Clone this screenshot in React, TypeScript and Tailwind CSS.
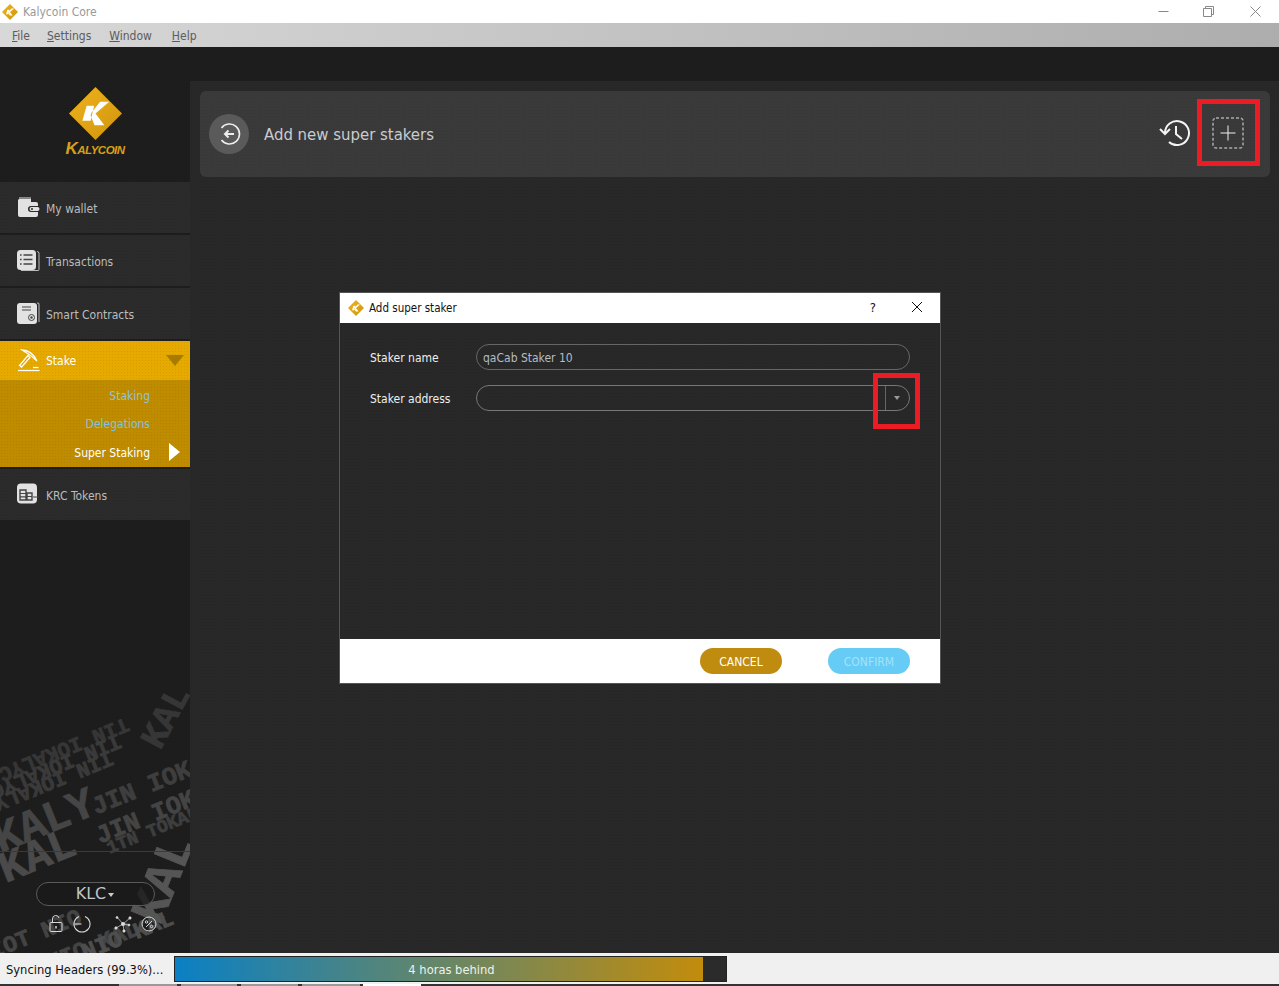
const dots = "bg-[radial-gradient(rgba(0,0,0,0.07)_1px,transparent_1px)] bg-[length:3px_3px]";

function Diamond({ size }: { size: number }) {
  return (
    <svg width={size} height={size} viewBox="0 0 54 54">
      <defs>
        <linearGradient id="gold" x1="0" y1="0" x2="1" y2="1">
          <stop offset="0" stopColor="#f0b31e" />
          <stop offset="1" stopColor="#cf940c" />
        </linearGradient>
      </defs>
      <path d="M27 0 L54 27 L27 54 L0 27 Z" fill="url(#gold)" />
      <path d="M18 19 L25.6 19 L22 34.5 L13.6 34.5 Z M41 15 L31.7 15 L23 26 L22 29 L26 39 L36 39 L27 27 Z" fill="#fff" />
    </svg>
  );
}

function WalletIcon() {
  return (
    <svg width="23" height="23" viewBox="0 0 23 23" fill="#e2e2e2">
      <path d="M2 1.5 h12 v1 h-12 z" />
      <path d="M1 4 a2 2 0 0 1 2 -1 h11 v3 h5 a2 2 0 0 1 2 2 v2 h-7 a3 3 0 0 0 0 6 h7 v3 a2 2 0 0 1 -2 2 h-16 a2 2 0 0 1 -2 -2 z" />
      <rect x="12.5" y="11" width="10" height="4" rx="2" />
      <circle cx="15" cy="13" r="1" fill="#2a2a2a" />
    </svg>
  );
}

function ListIcon() {
  return (
    <svg width="23" height="23" viewBox="0 0 23 23">
      <rect x="0" y="1" width="19" height="20" rx="3.5" fill="#e2e2e2" />
      <path d="M20 2.5 a2 2 0 0 1 2 2 v16 a1 1 0 0 1 -1 1 h-17" fill="none" stroke="#e2e2e2" strokeWidth="0.8" />
      <path d="M6.5 6 h9 M6.5 10.5 h9 M6.5 15 h9" stroke="#444" strokeWidth="1.4" />
      <path d="M3 6 h1.6 M3 10.5 h1.6 M3 15 h1.6" stroke="#444" strokeWidth="1.4" />
    </svg>
  );
}

function ContractIcon() {
  return (
    <svg width="23" height="23" viewBox="0 0 23 23">
      <rect x="0" y="1" width="20" height="21" rx="3" fill="#e2e2e2" />
      <path d="M20 1 h1 a1 1 0 0 1 1 1 v18" fill="none" stroke="#e2e2e2" strokeWidth="0.8" />
      <path d="M5 5 h9 M5 8 h9" stroke="#444" strokeWidth="1.2" />
      <circle cx="14.5" cy="15.5" r="3" fill="none" stroke="#444" strokeWidth="1" />
      <circle cx="14.5" cy="15.5" r="1.2" fill="#444" />
    </svg>
  );
}

function PickIcon() {
  return (
    <svg width="23" height="23" viewBox="0 0 23 23" fill="none" stroke="#fff" strokeWidth="1.3">
      <path d="M1 21.5 h21.5" />
      <path d="M16 18.5 h5.5" />
      <path d="M2.5 16.5 L11 6.5 L13 8.5 L4.5 18 Z" />
      <path d="M5 1 C11 1 17 5 20 12 C16 8 13 5.5 5 1 Z" />
    </svg>
  );
}

function TokenIcon() {
  return (
    <svg width="23" height="23" viewBox="0 0 23 23">
      <rect x="0" y="0.5" width="20" height="20" rx="4" fill="#e2e2e2" />
      <path d="M3 7 h6 v10 h-6 z M10 10 h5 v7 h-5 z" fill="none" stroke="#444" strokeWidth="1.4" />
      <path d="M3 10.5 h6 M3 13.8 h6 M10 13.5 h5 M16 14 h6" stroke="#444" strokeWidth="1.2" />
    </svg>
  );
}

function NavRow({ icon, label }: { icon: React.ReactNode; label: string }) {
  return (
    <div className={`flex h-[51px] items-center bg-[#2b2b2b] pl-[17px] ${dots}`}>
      <span className="flex w-[29px] shrink-0">{icon}</span>
      <span className="pt-[3px] text-[12px] text-[#bcbcbc]">{label}</span>
    </div>
  );
}

// decorative lettering behind the bottom of the sidebar, top values are page y
function Tread() {
  return (
    <div aria-hidden className="absolute inset-0 -top-[47px] overflow-hidden select-none [font-family:'Liberation_Mono',monospace] font-bold leading-none whitespace-nowrap [-webkit-text-stroke:0.8px_currentColor]">
      <div className="absolute left-[-6px] top-[738px] rotate-[158deg] text-[21px] text-[#363636]">TIN IOKALYC</div>
      <div className="absolute left-[-14px] top-[755px] rotate-[158deg] text-[21px] text-[#3a3a3a]">TIN IOKALYC</div>
      <div className="absolute left-[-22px] top-[772px] rotate-[158deg] text-[21px] text-[#3a3a3a]">TIN IOKALYC</div>
      <div className="absolute left-[88px] top-[768px] rotate-[-22deg] text-[25px] text-[#3e3e3e]">JIN IOKALY</div>
      <div className="absolute left-[92px] top-[797px] rotate-[-22deg] text-[25px] text-[#444]">JIN IOKALY</div>
      <div className="absolute left-[104px] top-[822px] rotate-[-22deg] text-[18px] text-[#3e3e3e]">1TN TOKAL</div>
      <div className="absolute left-[-8px] top-[800px] rotate-[-22deg] text-[44px] text-[#454545]">KALY</div>
      <div className="absolute left-[-2px] top-[835px] rotate-[-22deg] text-[44px] text-[#4a4a4a]">KAL</div>
      <div className="absolute left-[135px] top-[700px] rotate-[-62deg] text-[36px] text-[#363636]">KAL</div>
      <div className="absolute left-[120px] top-[855px] rotate-[-68deg] text-[50px] text-[#555]">KAL</div>
      <div className="absolute left-[-12px] top-[924px] rotate-[-22deg] text-[23px] text-[#444]">IOT NIO</div>
      <div className="absolute left-[-8px] top-[946px] rotate-[-22deg] text-[23px] text-[#444]">IOT NIO KAL</div>
      <div className="absolute left-[80px] top-[925px] rotate-[-22deg] text-[23px] text-[#4e4e4e]">NIO KAL</div>
    </div>
  );
}

export default function App() {
  return (
    <div className="relative flex h-[986px] w-[1279px] flex-col overflow-hidden bg-[#1b1b1b] [font-family:'DejaVu_Sans_Condensed',sans-serif]">
      {/* window title */}
      <div className="flex h-[23px] shrink-0 items-center bg-white">
        <span className="ml-[2px] flex w-[21px]"><Diamond size={16} /></span>
        <span className="text-[12px] text-[#999]">Kalycoin Core</span>
        <div className="ml-auto flex items-center pr-[18px]">
          <svg width="11" height="11" viewBox="0 0 11 11" stroke="#888" fill="none"><path d="M0.5 5.5 h10" /></svg>
          <svg className="ml-[34px]" width="11" height="11" viewBox="0 0 11 11" stroke="#888" fill="none"><path d="M0.5 2.5 h8 v8 h-8 z M2.5 2.5 v-2 h8 v8 h-2" /></svg>
          <svg className="ml-[36px]" width="11" height="11" viewBox="0 0 11 11" stroke="#888" fill="none"><path d="M0.5 0.5 L10.5 10.5 M10.5 0.5 L0.5 10.5" /></svg>
        </div>
      </div>
      {/* menu bar */}
      <div className="flex h-[24px] shrink-0 items-center bg-gradient-to-r from-[#d8d8d8] to-[#adadad] pl-[12px] pt-[1px] text-[12px] text-[#5c5c5c]">
        <span><span className="underline">F</span>ile</span>
        <span className="ml-[17px]"><span className="underline">S</span>ettings</span>
        <span className="ml-[18px]"><span className="underline">W</span>indow</span>
        <span className="ml-[20px]"><span className="underline">H</span>elp</span>
      </div>

      <div className={`flex h-[906px] shrink-0 bg-[#1d1d1d] ${dots}`}>
        <aside className="relative flex w-[190px] shrink-0 flex-col">
          <Tread />
          <div className="relative flex h-[135px] shrink-0 flex-col items-center pt-[40px]">
            <Diamond size={53} />
            <span className="mt-[1px] text-[11.5px] font-bold italic leading-[15px] tracking-[-0.5px] text-[#d9a017] [font-family:'Liberation_Sans',sans-serif]">
              <span className="text-[17px]">K</span>ALYCOIN
            </span>
          </div>
          <nav className="relative flex flex-col gap-[2px]">
            <NavRow icon={<WalletIcon />} label="My wallet" />
            <NavRow icon={<ListIcon />} label="Transactions" />
            <NavRow icon={<ContractIcon />} label="Smart Contracts" />
            <div className="flex flex-col">
              <div className={`flex h-[39px] items-center bg-[#e5a900] pl-[17px] pr-[6px] ${dots}`}>
                <span className="flex w-[29px] shrink-0"><PickIcon /></span>
                <span className="text-[12px] text-white">Stake</span>
                <span className="ml-auto h-0 w-0 border-x-[9px] border-t-[11px] border-x-transparent border-t-[#a67b00]" />
              </div>
              <div className={`flex h-[87px] flex-col items-end bg-[#bf8c00] pr-[40px] pt-[2px] text-[12px] ${dots}`}>
                <span className="flex h-[29px] items-center text-[#8fc4d2]">Staking</span>
                <span className="flex h-[29px] items-center text-[#7cc4e0]">Delegations</span>
                <span className="relative flex h-[29px] items-center text-white">
                  Super Staking
                  <span className="absolute left-[calc(100%+19px)] top-[4px] h-0 w-0 border-y-[9px] border-l-[11px] border-y-transparent border-l-white" />
                </span>
              </div>
            </div>
            <NavRow icon={<TokenIcon />} label="KRC Tokens" />
          </nav>
          <div className="relative mt-auto flex h-[102px] shrink-0 flex-col items-center border-t border-[#3a3a3a] pt-[30px]">
            <div className="flex h-[24px] w-[119px] items-center justify-center rounded-full border border-[#5a5a5a] bg-[#1a1a1a]/80 text-[16px] text-[#c0c4cc] [font-family:'DejaVu_Sans',sans-serif]">
              KLC
              <span className="ml-[2px] mt-[2px] h-0 w-0 border-x-[3px] border-t-[4px] border-x-transparent border-t-[#ccc]" />
            </div>
            <div className="mt-[9px] flex items-center self-stretch pl-[49px]">
              <svg width="14" height="18" viewBox="0 0 14 18" fill="none" stroke="#d8d8d8">
                <rect x="1" y="7.5" width="12" height="9" rx="1" />
                <path d="M3.5 7.5 V4 a3.3 3.3 0 0 1 6.5 -1" />
                <path d="M7 11 v2.5" strokeWidth="1.5" />
              </svg>
              <svg className="ml-[10px]" width="18" height="18" viewBox="0 0 18 18" fill="none" stroke="#d8d8d8" strokeWidth="1.1">
                <path d="M6 1.6 a8 8 0 1 0 6 0" />
                <path d="M1.5 9 h7" />
              </svg>
              <svg className="ml-[23px]" width="18" height="18" viewBox="0 0 18 18" fill="#e0e0e0" stroke="#d8d8d8" strokeWidth="0.7">
                <path d="M9 9 L3 2 M9 9 L16 3 M9 9 L2 13 M9 9 L10 16 M9 9 L15 10" fill="none" />
                <circle cx="9" cy="9" r="1.7" /><circle cx="3" cy="2.5" r="1" /><circle cx="16" cy="3" r="1.2" />
                <circle cx="2" cy="13" r="1.2" /><circle cx="10" cy="16" r="1.2" /><circle cx="15" cy="10" r="1" />
              </svg>
              <svg className="ml-[9px]" width="16" height="16" viewBox="0 0 16 16" fill="none" stroke="#d8d8d8">
                <circle cx="8" cy="8" r="7" />
                <path d="M5 11 L11 5" />
                <circle cx="5.5" cy="6" r="1.2" /><circle cx="10.5" cy="10.5" r="1.2" />
              </svg>
            </div>
          </div>
        </aside>

        <div className={`mt-[34px] flex-1 bg-[#282828] py-[10px] pl-[10px] pr-[9px] ${dots}`}>
          <div className={`flex h-[86px] items-center rounded-[6px] bg-[#3a3a3a] pl-[9px] pr-[26px] ${dots}`}>
            <span className="flex h-[40px] w-[40px] items-center justify-center rounded-full bg-[#5a5a5a]">
              <svg width="26" height="26" viewBox="0 0 26 26" fill="none" stroke="#eee" strokeWidth="1.6">
                <path d="M5.5 7 a10 10 0 1 1 0 12" />
                <path d="M18 13 h-9 M12.5 9.5 L9 13 L12.5 16.5" strokeWidth="2" />
              </svg>
            </span>
            <span className="ml-[15px] pt-[2px] text-[16.6px] text-[#c9ccd0]">Add new super stakers</span>
            <div className="ml-auto flex items-center gap-[21px]">
              <svg className="mb-[3px]" width="32" height="28" viewBox="0 0 32 28" fill="none" stroke="#f4f4f4" strokeWidth="2">
                <path d="M6 14 a12 12 0 1 1 4 9" />
                <path d="M1 10 L6 15 L11 10" />
                <path d="M17 7 v8 l6 5" />
              </svg>
              <svg className="mb-[2px]" width="32" height="32" viewBox="0 0 32 32" fill="none">
                <rect x="1" y="1" width="30" height="30" rx="3" stroke="#aaa" strokeWidth="1.5" strokeDasharray="3 2" />
                <path d="M16 8.5 v15 M8.5 16 h15" stroke="#f0f0f0" />
              </svg>
            </div>
          </div>
        </div>
      </div>

      {/* status bar */}
      <div className="flex h-[31px] shrink-0 items-center bg-[#f0f0f0] pl-[6px] text-[12.8px] text-[#111]">
        <span className="w-[168px] pt-[3px]">Syncing Headers (99.3%)...</span>
        <div className="flex h-[26px] w-[553px] border border-[#222] bg-[#2b2b2b]">
          <div className="w-[528px] bg-linear-to-r/srgb from-[#0a80c4] to-[#c28c0c]" />
        </div>
      </div>
      <div className="absolute left-[175px] top-[957px] flex h-[26px] w-[553px] items-center justify-center text-[12.8px] text-[#eef2ee]">4 horas behind</div>
      <div className="flex h-[2px] shrink-0 bg-[#333] pl-[119px]">
        <span className="w-[58px] bg-[#999]" />
        <span className="ml-[4px] w-[56px] bg-[#999]" />
        <span className="ml-[4px] w-[57px] bg-[#999]" />
        <span className="ml-[4px] w-[58px] bg-[#999]" />
        <span className="ml-[3px] w-[58px] bg-white" />
      </div>

      {/* dialog */}
      <div className="absolute left-[339px] top-[292px] flex h-[392px] w-[602px] flex-col border border-[#555] bg-[#282828]">
        <div className="flex h-[30px] shrink-0 items-center bg-white pl-[8px] pr-[17px]">
          <span className="flex w-[21px]"><Diamond size={16} /></span>
          <span className="pt-[2px] text-[11.5px] text-[#111]">Add super staker</span>
          <span className="ml-auto mr-[1px] text-[13px] text-[#111]">?</span>
          <svg className="ml-[34px] mb-[2px]" width="12" height="12" viewBox="0 0 12 12" stroke="#111" fill="none"><path d="M1 1 L11 11 M11 1 L1 11" /></svg>
        </div>
        <div className={`flex flex-1 flex-col gap-[15px] px-[30px] pt-[21px] ${dots}`}>
          <div className="flex items-center">
            <span className="w-[106px] pt-[1px] text-[12px] text-[#eee]">Staker name</span>
            <div className="flex h-[26px] flex-1 items-center rounded-full border border-[#666] pl-[6px] pt-[1px] text-[12px] text-[#b4bcc4]">qaCab Staker 10</div>
          </div>
          <div className="flex items-center">
            <span className="w-[106px] pt-[1px] text-[12px] text-[#eee]">Staker address</span>
            <div className="flex h-[26px] flex-1 items-center justify-end rounded-full border border-[#777]">
              <div className="flex h-full w-[24px] items-center justify-center border-l border-[#666] pr-[1px]">
                <span className="h-0 w-0 border-x-[3px] border-t-[4px] border-x-transparent border-t-[#999]" />
              </div>
            </div>
          </div>
        </div>
        <div className="flex h-[44px] shrink-0 items-center justify-end gap-[46px] bg-white pr-[30px] text-[12px]">
          <span className="flex h-[26px] w-[82px] items-center justify-center rounded-full bg-[#c08c10] pt-[1px] text-white">CANCEL</span>
          <span className="flex h-[26px] w-[82px] items-center justify-center rounded-full bg-[#66ccf5] pt-[1px] text-[#a4e2f9]">CONFIRM</span>
        </div>
      </div>

      {/* red annotations */}
      <div className="absolute left-[1197px] top-[99px] h-[67px] w-[63px] border-[5px] border-[#ed1c24]" />
      <div className="absolute left-[873px] top-[373px] h-[56px] w-[47px] border-[5px] border-[#ed1c24]" />
    </div>
  );
}
